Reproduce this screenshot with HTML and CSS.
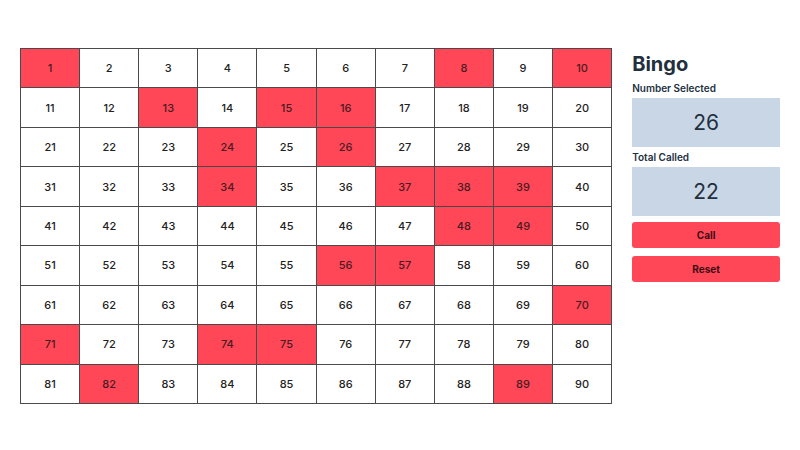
FILE: index.html
```html
<!DOCTYPE html>
<html>
<head>
<meta charset="utf-8">
<link rel="stylesheet" href="styles.css">
</head>
<body>
<div class="page">
  <div class="board">
    <div class="cell on">1</div><div class="cell">2</div><div class="cell">3</div><div class="cell">4</div><div class="cell">5</div><div class="cell">6</div><div class="cell">7</div><div class="cell on">8</div><div class="cell">9</div><div class="cell on">10</div>
    <div class="cell">11</div><div class="cell">12</div><div class="cell on">13</div><div class="cell">14</div><div class="cell on">15</div><div class="cell on">16</div><div class="cell">17</div><div class="cell">18</div><div class="cell">19</div><div class="cell">20</div>
    <div class="cell">21</div><div class="cell">22</div><div class="cell">23</div><div class="cell on">24</div><div class="cell">25</div><div class="cell on">26</div><div class="cell">27</div><div class="cell">28</div><div class="cell">29</div><div class="cell">30</div>
    <div class="cell">31</div><div class="cell">32</div><div class="cell">33</div><div class="cell on">34</div><div class="cell">35</div><div class="cell">36</div><div class="cell on">37</div><div class="cell on">38</div><div class="cell on">39</div><div class="cell">40</div>
    <div class="cell">41</div><div class="cell">42</div><div class="cell">43</div><div class="cell">44</div><div class="cell">45</div><div class="cell">46</div><div class="cell">47</div><div class="cell on">48</div><div class="cell on">49</div><div class="cell">50</div>
    <div class="cell">51</div><div class="cell">52</div><div class="cell">53</div><div class="cell">54</div><div class="cell">55</div><div class="cell on">56</div><div class="cell on">57</div><div class="cell">58</div><div class="cell">59</div><div class="cell">60</div>
    <div class="cell">61</div><div class="cell">62</div><div class="cell">63</div><div class="cell">64</div><div class="cell">65</div><div class="cell">66</div><div class="cell">67</div><div class="cell">68</div><div class="cell">69</div><div class="cell on">70</div>
    <div class="cell on">71</div><div class="cell">72</div><div class="cell">73</div><div class="cell on">74</div><div class="cell on">75</div><div class="cell">76</div><div class="cell">77</div><div class="cell">78</div><div class="cell">79</div><div class="cell">80</div>
    <div class="cell">81</div><div class="cell on">82</div><div class="cell">83</div><div class="cell">84</div><div class="cell">85</div><div class="cell">86</div><div class="cell">87</div><div class="cell">88</div><div class="cell on">89</div><div class="cell">90</div>
  </div>
  <div class="side">
    <h1 class="title">Bingo</h1>
    <div class="label">Number Selected</div>
    <div class="stat">26</div>
    <div class="label">Total Called</div>
    <div class="stat">22</div>
    <button class="btn">Call</button>
    <button class="btn">Reset</button>
  </div>
</div>
</body>
</html>
```
FILE: styles.css
```css
html, body {
  margin: 0;
  padding: 0;
  background: #ffffff;
}
body {
  font-family: Inter, "Liberation Sans", sans-serif;
  color: #222f3e;
}
.page {
  display: flex;
  gap: 20px;
  padding: 48px 20px 0 20px;
}
.board {
  flex: 4;
  display: grid;
  grid-template-columns: repeat(10, 1fr);
  grid-template-rows: repeat(9, 1fr);
  height: 356px;
  border-left: 1px solid #4a4a4a;
  border-top: 1px solid #4a4a4a;
  box-sizing: border-box;
}
.cell {
  border-right: 1px solid #4a4a4a;
  border-bottom: 1px solid #4a4a4a;
  display: flex;
  align-items: center;
  justify-content: center;
  font-size: 11px;
  font-weight: 500;
  color: #222;
}
.cell.on {
  background: #ff4757;
  color: #4a1b22;
}
.side {
  flex: 1;
  display: flex;
  flex-direction: column;
}
.title {
  margin: 4px 0 0 0;
  font-size: 20px;
  line-height: 24px;
  font-weight: 700;
  color: #222f3e;
}
.label {
  margin-top: 3px;
  font-size: 10px;
  line-height: 14px;
  font-weight: 600;
  color: #222f3e;
}
.title + .label {
  margin-top: 5px;
}
.stat {
  margin-top: 3px;
  height: 49px;
  background: #c8d6e5;
  display: flex;
  align-items: center;
  justify-content: center;
  font-size: 21px;
  font-weight: 400;
  color: #222f3e;
}
.btn {
  margin-top: 6px;
  height: 26px;
  border: none;
  border-radius: 3px;
  background: #ff4757;
  font-family: Inter, "Liberation Sans", sans-serif;
  font-size: 10px;
  font-weight: 700;
  color: #3d0d14;
  padding: 0;
}
.btn + .btn {
  margin-top: 8px;
}
```
